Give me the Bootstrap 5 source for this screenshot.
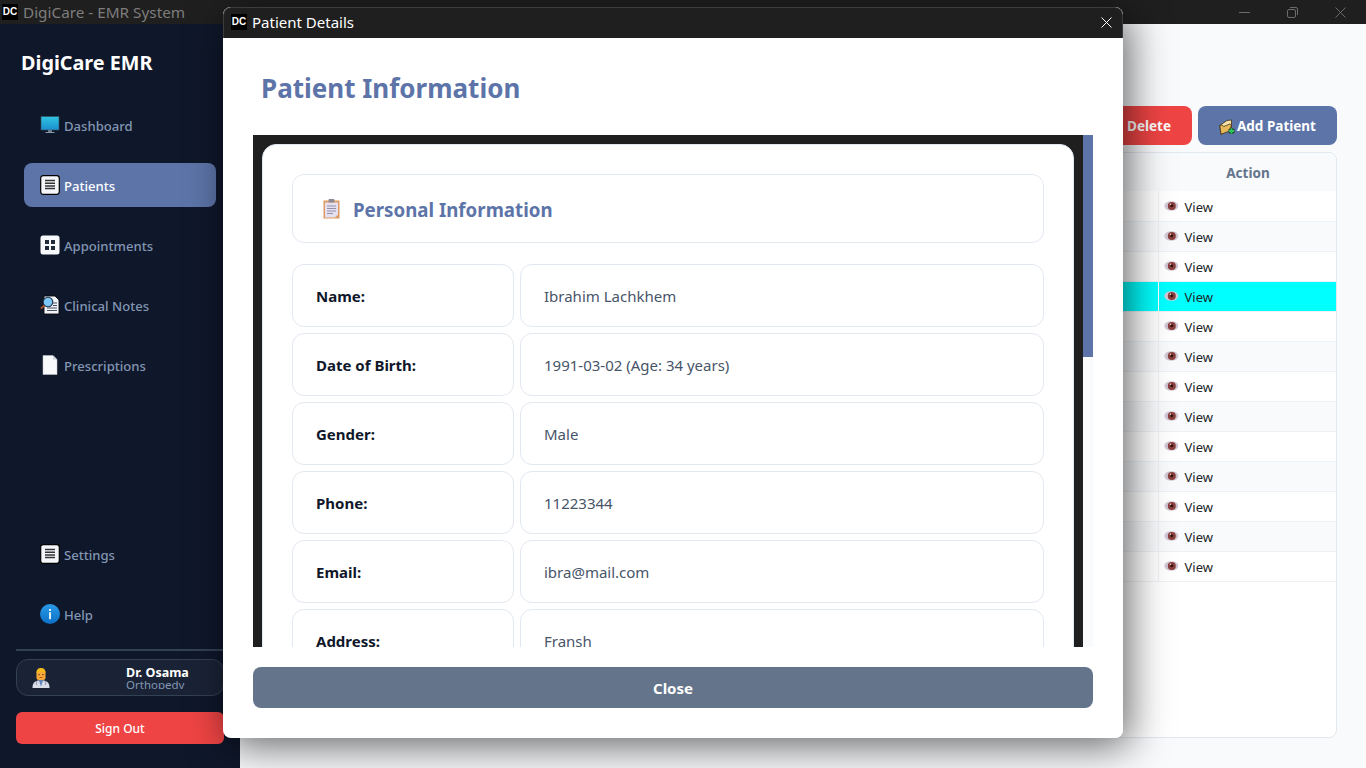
<!DOCTYPE html>
<html lang="en">
<head>
  <meta charset="UTF-8" />
  <meta name="viewport" content="width=device-width, initial-scale=1.0"/>
  <title>DigiCare - EMR System</title>
  <link href="https://cdn.jsdelivr.net/npm/bootstrap@5.3.0/dist/css/bootstrap.min.css" rel="stylesheet"/>
  <style>
    html, body { height: 100%; overflow: hidden; }
    body { font-family: "Noto Sans", "Open Sans", sans-serif; background: #f8fafc; color: #0f172a; }

    .app { height: 768px; }
    .win-bar { height: 24px; background: #1f1f1f; color: #7d7d7d; font-size: 15.3px; flex: none; padding-left: 2px; }
    .win-title { margin-left: 5px; }
    .dc-logo { width: 16px; height: 16px; background: #000; color: #fff; font: 700 10px/16px "Liberation Sans", sans-serif; text-align: center; flex: none; }
    .win-btns { gap: 37px; padding-right: 20px; }

    .sidebar { width: 240px; flex: none; background: #0f172a; padding: 0 16px 24px; }
    .brand { font-size: 19.8px; font-weight: 700; color: #fff; margin: 24px 0 25px 5px; line-height: 30px; }
    .nav-btn { height: 44px; margin: 0 8px 16px; padding: 4px 0 0 16px; border-radius: 8px; color: #8296b3; font-size: 13.1px; font-weight: 500; gap: 4px; }
    .nav-btn.active { background: #5c74a8; color: #fff; }
    .nav-btn svg { width: 20px; height: 20px; flex: none; margin-top: -4px; }
    .nav-last { margin-bottom: 13px; }
    .side-rule { border-top: 2px solid #334155; margin: 0 0 8px; }
    .user-box { height: 37px; border: 1px solid #334155; border-radius: 12px; background: #1a2336; padding-left: 14px; overflow: hidden; }
    .user-name { font-size: 12.5px; font-weight: 700; color: #fff; line-height: 12px; }
    .user-role { font-size: 11.5px; color: #8296b3; line-height: 12px; height: 10px; overflow: hidden; }
    .user-text { margin-left: 75px; padding-top: 1px; }
    .sign-out { height: 32px; margin-top: 16px; padding: 2px 0 0; background: #ef4444; border: 0; border-radius: 6px; color: #fff; font-size: 12px; font-weight: 500; }

    .main { padding: 82px 29px 30px 16px; min-width: 0; }
    .btn-app { height: 39px; border: 0; border-radius: 8px; color: #fff; font-size: 13.5px; font-weight: 700; padding: 2px 0 0; }
    .btn-del { width: 122px; background: #ef4444; margin-right: 6px; padding-left: 38px; gap: 3px; }
    .btn-add { width: 139px; background: #5c74a8; gap: 2px; }
    .patients { margin-top: 7px; border: 1px solid #e2e8f0; border-radius: 8px; background: #fff; overflow: hidden; }
    .patients table { table-layout: fixed; font-size: 13px; --bs-table-bg: #fff; }
    .patients th { height: 38px; padding: 2px 0 0 2px; background: #f8fafc; color: #64748b; font-size: 13.5px; font-weight: 700; text-align: center; vertical-align: middle; border-bottom: 0; }
    .patients td { height: 30px; padding: 3px 0 0 5px; vertical-align: middle; border-bottom: 1px solid #eef2f7; }
    .patients td + td { border-left: 1px solid #eef2f7; }
    .patients th.col-action { width: 178px; }
    .patients tbody tr:nth-child(even) { --bs-table-bg: #f8fafc; }
    .patients tbody tr.picked { --bs-table-bg: #0ff; }
    .patients tr.picked td + td { border-left-color: #fff; }
    .eye { width: 15px; height: 12px; margin-right: 6px; vertical-align: -.5px; }

    .dialog { position: absolute; left: 223px; top: 7px; width: 900px; height: 731px; background: #fff; border-radius: 8px; overflow: hidden; }
    .dialog-wrap { position: absolute; left: 223px; top: 7px; width: 900px; height: 731px; border-radius: 8px; box-shadow: 6px 8px 40px rgba(0,0,0,.6); }
    .dialog-bar { height: 31px; background: #1f1f1f; color: #fff; font-size: 15px; padding: 0 10px 2px 7px; flex: none; border: 1px solid #3c3c3c; border-bottom: 0; border-radius: 8px 8px 0 0; gap: 5px; }
    .dialog-head { height: 97px; padding: 3px 38px 0; flex: none; color: #5c74a8; font-size: 26px; font-weight: 700; }
    .dialog-foot { padding: 20px 30px 30px; flex: none; }
    .btn-close-app { height: 41px; padding: 2px 0 0; background: #64748b; color: #fff; border: 0; border-radius: 8px; font-size: 15px; font-weight: 700; }
    .scroll-area { margin: 0 30px; min-height: 0; overflow: hidden; background: #1f1f1f; }
    .scroll-view { padding: 9px 9px 0; min-width: 0; overflow: hidden; }
    .scroll-track { width: 10px; flex: none; background: #f8fafc; }
    .scroll-thumb { height: 222px; background: #5c74a8; }
    .info-card { background: #fff; border: 1px solid #e2e8f0; border-radius: 14px; padding: 29px; }
    .info-title { height: 69px; border: 1px solid #e2e8f0; border-radius: 12px; padding: 4px 0 0 30px; gap: 13px; margin-bottom: 21px; color: #5c74a8; font-size: 18.7px; font-weight: 700; }
    .info-title svg { margin-top: -4px; }
    .info-row { display: grid; grid-template-columns: 222px 524px; gap: 6px; margin-bottom: 6px; }
    .info-cell { height: 63px; border: 1px solid #e2e8f0; border-radius: 12px; padding: 2px 0 0 23px; font-size: 15px; }
    .info-label { font-weight: 700; color: #0f172a; }
    .info-value { color: #475569; }
  </style>
</head>
<body>

<svg width="0" height="0" class="d-block position-absolute">
  <defs>
    <linearGradient id="screen" x1="0" y1="0" x2="0" y2="1"><stop offset="0" stop-color="#2fc4e0"/><stop offset="1" stop-color="#1c8fd0"/></linearGradient>
    <linearGradient id="blue" x1="0" y1="0" x2="0" y2="1"><stop offset="0" stop-color="#2a9be8"/><stop offset="1" stop-color="#0d6fc4"/></linearGradient>
    <symbol id="i-monitor" viewBox="0 0 20 20">
      <rect x="1" y="1.500" width="18" height="13.500" fill="url(#screen)" stroke="#3a4a5a" stroke-width=".6"/>
      <rect x="8" y="15" width="4" height="2" fill="#6c7b8a"/><rect x="5.500" y="17" width="9" height="1" fill="#8b98a5"/>
    </symbol>
    <symbol id="i-list" viewBox="0 0 20 20">
      <rect x=".7" y=".7" width="18.600" height="18.600" rx="2.500" fill="#f4f6fa" stroke="#000" stroke-width="1.200"/>
      <path d="M5 5.500h10M5 8.200h10M5 10.900h10M5 13.600h10" stroke="#333" stroke-width="1.500"/>
    </symbol>
    <symbol id="i-grid" viewBox="0 0 20 20">
      <rect x=".5" y=".5" width="19" height="19" rx="2.500" fill="#f7f9fc"/>
      <path d="M5 5h4v4H5zM11 5h4v4h-4zM5 11h4v4H5zM11 11h4v4h-4z" fill="#222b3a"/>
    </symbol>
    <symbol id="i-notes" viewBox="0 0 20 20">
      <path d="M4 1h11l4 4v14H4z" fill="#f0f3f8" stroke="#0a0a0a" stroke-width=".9"/>
      <path d="M12 8h5M13 10.500h4M7 13h10M7 15.500h10" stroke="#4a525e" stroke-width="1.100"/>
      <circle cx="8" cy="7" r="4.800" fill="#7cc6f5" stroke="#20364e" stroke-width="1.100"/>
      <path d="M4.500 10.500L.8 13.500" stroke="#a8502a" stroke-width="1.800"/>
    </symbol>
    <symbol id="i-page" viewBox="0 0 20 20">
      <path d="M3 0.500h10l4 4v15H3z" fill="#f8f9fb" stroke="#c4cad3" stroke-width=".5"/>
      <path d="M13 .5v4h4z" fill="#cfd4db"/>
    </symbol>
    <symbol id="i-info" viewBox="0 0 20 20">
      <circle cx="10" cy="10" r="10" fill="url(#blue)"/>
      <rect x="9" y="8.200" width="2" height="7" fill="#dff0fc"/><rect x="9" y="5" width="2" height="2" fill="#dff0fc"/>
    </symbol>
    <symbol id="i-doctor" viewBox="0 0 20 22">
      <path d="M1.500 21c0-5 2-6.500 5-7.500h7c3 1 5 2.500 5 7.500z" fill="#d9dde8"/>
      <path d="M8 13.500l2 6 2-6z" fill="#5f86c0"/>
      <path d="M6 14c-1 2-1 3 0 4M14 14c1 2 1 3 0 4" stroke="#6e7691" stroke-width=".8" fill="none"/>
      <rect x="5.500" y="3" width="9" height="10" rx="2.500" fill="#f7a93a"/>
      <path d="M5.500 6c0-4 2-5 4.500-5s4.500 1 4.500 5c-1-1.500-8-1.500-9 0z" fill="#f2b81e"/>
      <path d="M8.500 10.500h3" stroke="#b4561c"/>
      <rect x="7.500" y="7" width="1.200" height="1.200" fill="#5b3315"/><rect x="11.300" y="7" width="1.200" height="1.200" fill="#5b3315"/>
    </symbol>
    <symbol id="i-clip" viewBox="0 0 17 20">
      <rect x=".5" y="1.500" width="16" height="18" fill="#df9a63"/>
      <path d="M2 3.500h13v12l-3 3H2z" fill="#e5e0ef"/>
      <rect x="5.500" y="0" width="6" height="3.500" rx="1" fill="#8d8a96"/>
      <path d="M4 7h9M4 9.500h9M4 12h9M4 14.500h6" stroke="#8b86a0" stroke-width=".9"/>
    </symbol>
    <symbol id="i-folder" viewBox="0 0 16 16">
      <path d="M.8 6.500L8 1.500l4.500-.5V9L2 15.300z" fill="#f7e2a8" stroke="#3e3113" stroke-width=".8"/>
      <path d="M.8 6.500l2-.5 2 1.500 6-2.500 1.700 1L10.500 12 2 15.300z" fill="#e8b95a" stroke="#3e3113" stroke-width=".8"/>
      <path d="M9.500 12h6M12.500 9v6" stroke="#1d2a1d" stroke-width="3.600"/>
      <path d="M9.800 12h5.400M12.500 9.300v5.400" stroke="#2cc65a" stroke-width="2.200"/>
    </symbol>
    <symbol id="i-eye" viewBox="0 0 15 12">
      <ellipse cx="7.300" cy="6" rx="7" ry="4.800" fill="#d3c8d6"/>
      <circle cx="7.800" cy="6" r="4" fill="#8a3f3c"/>
      <circle cx="7.800" cy="5.800" r="1.400" fill="#2a1312"/>
      <circle cx="6.400" cy="4.200" r=".8" fill="#eed9d9"/>
    </symbol>
    <symbol id="i-trash" viewBox="0 0 16 16">
      <path d="M3 4h10l-1 11H4z" fill="#c9ced6"/><path d="M2 3h12" stroke="#8d949e" stroke-width="1.500"/>
    </symbol>
  </defs>
</svg>

<div class="app d-flex flex-column">
  <div class="win-bar d-flex align-items-center">
    <div class="dc-logo">DC</div>
    <span class="win-title">DigiCare - EMR System</span>
    <div class="win-btns d-flex align-items-center ms-auto">
      <svg width="11" height="11" viewBox="0 0 11 11"><path d="M0 5.500h11" stroke="#6b6b6b"/></svg>
      <svg width="11" height="11" viewBox="0 0 11 11" fill="none" stroke="#6b6b6b"><rect x=".5" y="2.500" width="8" height="8" rx="1.500"/><path d="M3 .5h6a1.500 1.500 0 0 1 1.500 1.500v6"/></svg>
      <svg width="11" height="11" viewBox="0 0 11 11"><path d="M.5.5l10 10M10.500.5l-10 10" stroke="#6b6b6b"/></svg>
    </div>
  </div>

  <div class="d-flex flex-grow-1" style="min-height:0">
    <aside class="sidebar d-flex flex-column">
      <div class="brand">DigiCare EMR</div>
      <div class="nav-btn d-flex align-items-center"><svg><use href="#i-monitor"/></svg>Dashboard</div>
      <div class="nav-btn active d-flex align-items-center"><svg><use href="#i-list"/></svg>Patients</div>
      <div class="nav-btn d-flex align-items-center"><svg><use href="#i-grid"/></svg>Appointments</div>
      <div class="nav-btn d-flex align-items-center"><svg><use href="#i-notes"/></svg>Clinical Notes</div>
      <div class="nav-btn d-flex align-items-center"><svg><use href="#i-page"/></svg>Prescriptions</div>
      <div class="mt-auto">
        <div class="nav-btn d-flex align-items-center"><svg><use href="#i-list"/></svg>Settings</div>
        <div class="nav-btn nav-last d-flex align-items-center"><svg><use href="#i-info"/></svg>Help</div>
        <div class="side-rule"></div>
        <div class="user-box d-flex align-items-center">
          <svg width="20" height="22"><use href="#i-doctor"/></svg>
          <div class="user-text">
            <div class="user-name">Dr. Osama</div>
            <div class="user-role">Orthopedy</div>
          </div>
        </div>
        <button class="sign-out w-100 d-block">Sign Out</button>
      </div>
    </aside>

    <main class="main flex-grow-1 d-flex flex-column">
      <div class="d-flex justify-content-end">
        <button class="btn-app btn-del d-flex align-items-center justify-content-start"><svg width="16" height="16"><use href="#i-trash"/></svg>Delete</button>
        <button class="btn-app btn-add d-flex align-items-center justify-content-center"><svg width="16" height="16"><use href="#i-folder"/></svg>Add Patient</button>
      </div>
      <div class="patients flex-grow-1">
        <table class="table mb-0">
          <thead><tr><th></th><th class="col-action">Action</th></tr></thead>
          <tbody>
            <tr><td></td><td><svg class="eye"><use href="#i-eye"/></svg>View</td></tr>
            <tr><td></td><td><svg class="eye"><use href="#i-eye"/></svg>View</td></tr>
            <tr><td></td><td><svg class="eye"><use href="#i-eye"/></svg>View</td></tr>
            <tr class="picked"><td></td><td><svg class="eye"><use href="#i-eye"/></svg>View</td></tr>
            <tr><td></td><td><svg class="eye"><use href="#i-eye"/></svg>View</td></tr>
            <tr><td></td><td><svg class="eye"><use href="#i-eye"/></svg>View</td></tr>
            <tr><td></td><td><svg class="eye"><use href="#i-eye"/></svg>View</td></tr>
            <tr><td></td><td><svg class="eye"><use href="#i-eye"/></svg>View</td></tr>
            <tr><td></td><td><svg class="eye"><use href="#i-eye"/></svg>View</td></tr>
            <tr><td></td><td><svg class="eye"><use href="#i-eye"/></svg>View</td></tr>
            <tr><td></td><td><svg class="eye"><use href="#i-eye"/></svg>View</td></tr>
            <tr><td></td><td><svg class="eye"><use href="#i-eye"/></svg>View</td></tr>
            <tr><td></td><td><svg class="eye"><use href="#i-eye"/></svg>View</td></tr>
          </tbody>
        </table>
      </div>
    </main>
  </div>
</div>

<!-- modal window sits over the app -->
<div class="dialog-wrap"></div>
<div class="dialog d-flex flex-column">
  <div class="dialog-bar d-flex align-items-center">
    <div class="dc-logo">DC</div>
    <span>Patient Details</span>
    <svg class="ms-auto" width="11" height="11" viewBox="0 0 11 11"><path d="M.5.5l10 10M10.500.5l-10 10" stroke="#fff"/></svg>
  </div>
  <div class="dialog-head d-flex align-items-center">Patient Information</div>
  <div class="scroll-area flex-grow-1 d-flex">
    <div class="scroll-view flex-grow-1">
      <div class="info-card">
        <div class="info-title d-flex align-items-center"><svg width="17" height="20"><use href="#i-clip"/></svg>Personal Information</div>
        <div class="info-row"><div class="info-cell info-label d-flex align-items-center">Name:</div><div class="info-cell info-value d-flex align-items-center">Ibrahim Lachkhem</div></div>
        <div class="info-row"><div class="info-cell info-label d-flex align-items-center">Date of Birth:</div><div class="info-cell info-value d-flex align-items-center">1991-03-02 (Age: 34 years)</div></div>
        <div class="info-row"><div class="info-cell info-label d-flex align-items-center">Gender:</div><div class="info-cell info-value d-flex align-items-center">Male</div></div>
        <div class="info-row"><div class="info-cell info-label d-flex align-items-center">Phone:</div><div class="info-cell info-value d-flex align-items-center">11223344</div></div>
        <div class="info-row"><div class="info-cell info-label d-flex align-items-center">Email:</div><div class="info-cell info-value d-flex align-items-center">ibra@mail.com</div></div>
        <div class="info-row"><div class="info-cell info-label d-flex align-items-center">Address:</div><div class="info-cell info-value d-flex align-items-center">Fransh</div></div>
      </div>
    </div>
    <div class="scroll-track"><div class="scroll-thumb"></div></div>
  </div>
  <div class="dialog-foot">
    <button class="btn-close-app w-100 d-block">Close</button>
  </div>
</div>

<script src="https://cdn.jsdelivr.net/npm/bootstrap@5.3.0/dist/js/bootstrap.bundle.min.js"></script>
</body>
</html>
